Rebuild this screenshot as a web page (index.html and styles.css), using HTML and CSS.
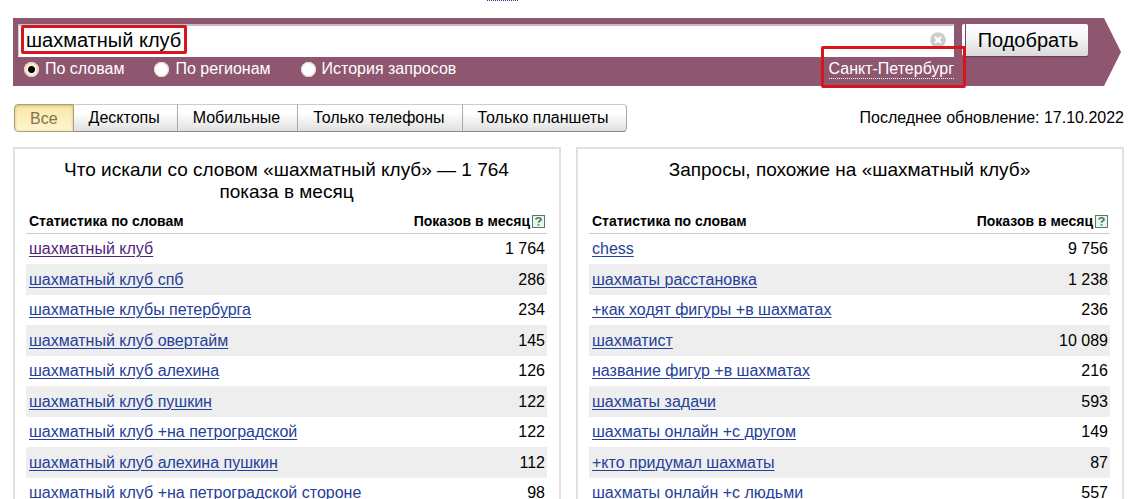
FILE: index.html
```html
<!DOCTYPE html>
<html lang="ru">
<head>
<meta charset="utf-8">
<title>Подбор слов</title>
<link rel="stylesheet" href="styles.css">
</head>
<body>
<div class="topline"><span class="topline-link"></span></div>
<form class="search">
  <div class="search-row">
    <div class="query">
      <input class="query-input" type="text" aria-label="Запрос" value="шахматный клуб">
      <button class="clear" type="button" aria-label="Очистить">
        <svg width="16" height="16" viewBox="0 0 16 16"><circle cx="8" cy="8" r="7.8" fill="#ccc"/><path d="M5 5l6 6M11 5l-6 6" stroke="#fff" stroke-width="2.4"/></svg>
      </button>
      <span class="mark mark-query"></span>
    </div>
    <button class="submit" type="button">Подобрать</button>
  </div>
  <div class="options">
    <label class="option"><input class="radio" type="radio" name="mode" checked>По словам</label>
    <label class="option"><input class="radio" type="radio" name="mode">По регионам</label>
    <label class="option"><input class="radio" type="radio" name="mode">История запросов</label>
    <div class="region"><a class="region-link" href="#">Санкт-Петербург</a><span class="mark mark-region"></span></div>
  </div>
</form>
<div class="toolbar">
  <div class="tabs">
    <button class="tab tab-active" type="button">Все</button>
    <button class="tab" type="button">Десктопы</button>
    <button class="tab" type="button">Мобильные</button>
    <button class="tab" type="button">Только телефоны</button>
    <button class="tab" type="button">Только планшеты</button>
  </div>
  <div class="updated">Последнее обновление: 17.10.2022</div>
</div>
<main class="panels">
  <section class="panel">
    <h2 class="title">Что искали со словом «шахматный клуб» — 1&nbsp;764 показа в месяц</h2>
    <table class="stats">
      <thead><tr><th>Статистика по словам</th><th class="num"><span class="shows">Показов в месяц<a class="help" href="#" aria-label="Справка"><svg width="13" height="13" viewBox="0 0 13 13"><rect x=".5" y=".5" width="12" height="12" fill="#e9f4ea" stroke="#4f8060"/><path d="M4 4.5Q4 2.8 6.5 2.8T9 4.5Q9 5.6 7.6 6.1 6.5 6.6 6.5 7.8M6.5 9v1.5" fill="none" stroke="#47795a" stroke-width="1.6"/></svg></a></span></th></tr></thead>
      <tbody>
        <tr><td><a class="visited" href="#">шахматный клуб</a></td><td class="num">1 764</td></tr>
        <tr><td><a href="#">шахматный клуб спб</a></td><td class="num">286</td></tr>
        <tr><td><a href="#">шахматные клубы петербурга</a></td><td class="num">234</td></tr>
        <tr><td><a href="#">шахматный клуб овертайм</a></td><td class="num">145</td></tr>
        <tr><td><a href="#">шахматный клуб алехина</a></td><td class="num">126</td></tr>
        <tr><td><a href="#">шахматный клуб пушкин</a></td><td class="num">122</td></tr>
        <tr><td><a href="#">шахматный клуб +на петроградской</a></td><td class="num">122</td></tr>
        <tr><td><a href="#">шахматный клуб алехина пушкин</a></td><td class="num">112</td></tr>
        <tr><td><a href="#">шахматный клуб +на петроградской стороне</a></td><td class="num">98</td></tr>
      </tbody>
    </table>
  </section>
  <section class="panel">
    <h2 class="title">Запросы, похожие на «шахматный клуб»</h2>
    <table class="stats">
      <thead><tr><th>Статистика по словам</th><th class="num"><span class="shows">Показов в месяц<a class="help" href="#" aria-label="Справка"><svg width="13" height="13" viewBox="0 0 13 13"><rect x=".5" y=".5" width="12" height="12" fill="#e9f4ea" stroke="#4f8060"/><path d="M4 4.5Q4 2.8 6.5 2.8T9 4.5Q9 5.6 7.6 6.1 6.5 6.6 6.5 7.8M6.5 9v1.5" fill="none" stroke="#47795a" stroke-width="1.6"/></svg></a></span></th></tr></thead>
      <tbody>
        <tr><td><a href="#">chess</a></td><td class="num">9 756</td></tr>
        <tr><td><a href="#">шахматы расстановка</a></td><td class="num">1 238</td></tr>
        <tr><td><a href="#">+как ходят фигуры +в шахматах</a></td><td class="num">236</td></tr>
        <tr><td><a href="#">шахматист</a></td><td class="num">10 089</td></tr>
        <tr><td><a href="#">название фигур +в шахматах</a></td><td class="num">216</td></tr>
        <tr><td><a href="#">шахматы задачи</a></td><td class="num">593</td></tr>
        <tr><td><a href="#">шахматы онлайн +с другом</a></td><td class="num">149</td></tr>
        <tr><td><a href="#">+кто придумал шахматы</a></td><td class="num">87</td></tr>
        <tr><td><a href="#">шахматы онлайн +с людьми</a></td><td class="num">557</td></tr>
      </tbody>
    </table>
  </section>
</main>
</body>
</html>
```
FILE: styles.css
```css
* { box-sizing: border-box; }
body {
  margin: 0;
  padding: 0 9px 0 13px;
  height: 100vh;
  overflow: hidden;
  background: #fff;
  color: #000;
  font: 16px/20px "Liberation Sans", Arial, sans-serif;
}
button, input { font-family: inherit; color: inherit; margin: 0; }
button { cursor: pointer; }

.topline { height: 18px; padding-left: 474px; display: flex; align-items: flex-start; }
.topline-link { width: 31px; border-bottom: 1px dotted #1a3d8f; }

.search {
  position: relative;
  z-index: 0;
  margin-right: 3px;
  padding: 6px 33px 7px 5px;
}
.search::before {
  content: "";
  position: absolute;
  z-index: -1;
  inset: 0;
  background: #8f566f;
  clip-path: polygon(0 0, calc(100% - 17px) 0, 100% 50%, calc(100% - 17px) 100%, 0 100%);
}
.search-row { display: flex; gap: 8px; }
.query { position: relative; flex: 1; }
.query-input {
  display: block;
  width: 100%;
  height: 33px;
  padding: 0 36px 2px 7px;
  border: 1px solid #fff;
  border-top: 2px solid #c5bcc0;
  border-left-color: #d5c8ce;
  border-radius: 0;
  background: #fff;
  font-size: 20px;
  outline: 0;
}
.clear {
  position: absolute;
  right: 8px;
  top: 8px;
  padding: 0;
  border: 0;
  background: none;
  line-height: 0;
}
.mark { position: absolute; border: 3px solid #d7151b; border-radius: 2px; pointer-events: none; }
.mark-query { left: 3px; top: 1px; width: 166px; height: 29px; }
.mark-region { left: -8px; right: -12px; top: -13px; bottom: -9px; }
.submit {
  width: 126px;
  height: 32px;
  padding: 0 0 0 3px;
  border: 0;
  border-left: 3px solid #fff;
  border-radius: 2px;
  background: linear-gradient(#fff, #f7f7f7 40%, #d9d9d9);
  box-shadow: inset 1px 0 #75475b, 0 1px 1px #653d4f;
  font-size: 20px;
}
.options { display: flex; align-items: flex-start; padding: 2px 0 0 6px; color: #fff; }
.option { display: flex; align-items: center; gap: 6px; margin-right: 30px; }
.radio {
  appearance: none;
  width: 15px;
  height: 15px;
  border-radius: 50%;
  background: #fff;
  box-shadow: inset 0 0 1px 1px #ddd5cf;
}
.radio:checked { background: radial-gradient(#000 3px, #fff5dc 4px, #ecd9b4 7px); }
.region { position: relative; margin-left: auto; margin-right: 134px; }
.region-link { display: block; color: #fff; text-decoration: none; line-height: 19px; border-bottom: 1px dotted #fff; }

.toolbar { display: flex; justify-content: space-between; align-items: center; margin: 18px 0 15px; padding-left: 1px; }
.tabs { display: flex; }
.tab {
  height: 28px;
  padding: 0 17px 1px 15px;
  border: 1px solid #aaa;
  border-top-color: #ccc;
  border-bottom-color: #888;
  border-left-width: 0;
  background: linear-gradient(#fff 30%, #e0e0e0);
  font-size: 16px;
}
.tab:first-child { border-left-width: 1px; border-radius: 4px 0 0 4px; }
.tab:last-child { border-radius: 0 4px 4px 0; }
.tab-active {
  padding: 2px 15px 0;
  border-color: #aca07b;
  background: linear-gradient(#fbe8a6, #fff4cf);
  box-shadow: inset 0 1px 3px #c9b77a;
  color: #807552;
}

.panels { display: grid; grid-template-columns: 1fr 1fr; gap: 15px; }
.panel {
  display: flex;
  flex-direction: column;
  border: 2px solid #e0e0e0;
  padding: 10px 12px 0 11px;
}
.title { flex: 1; margin: 0; padding: 0 20px; font-size: 19px; line-height: 22px; font-weight: normal; text-align: center; }
.stats { width: 100%; border-collapse: separate; border-spacing: 0; }
.stats th { height: 31px; padding: 6px 3px 0; border-bottom: 1px solid #ccc; font-size: 14px; line-height: 18px; text-align: left; vertical-align: middle; }
.stats td { height: 30px; padding: 0 3px; line-height: 20px; }
.stats tr:nth-child(even) td { height: 31px; background: #eee; }
.stats .num { padding-right: 2px; text-align: right; }
.shows { display: inline-flex; align-items: center; gap: 2px; }
.help { display: flex; }
.stats a { color: #24409a; text-underline-offset: 2px; text-decoration-thickness: 1px; }
.stats .visited { color: #51247d; }
```
